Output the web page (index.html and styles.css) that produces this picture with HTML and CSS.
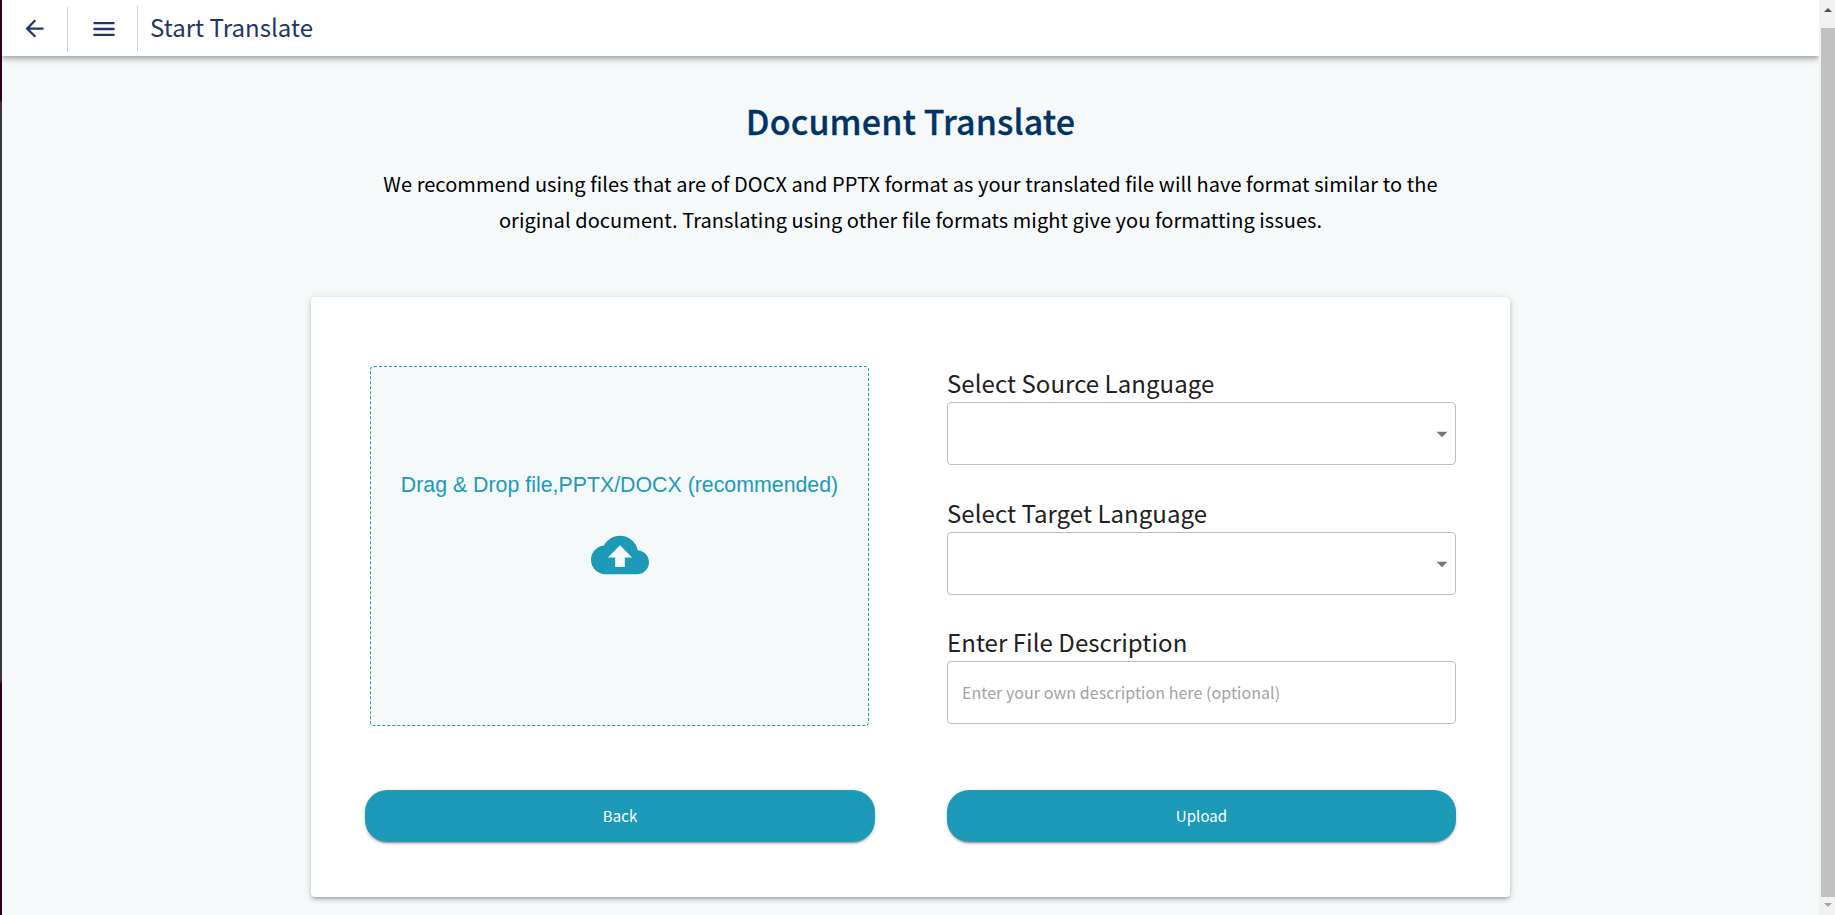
FILE: index.html
```html
<!DOCTYPE html>
<html lang="en">
<head>
<meta charset="utf-8">
<title>Start Translate</title>
<link rel="stylesheet" href="styles.css">
</head>
<body>
<div class="window">
  <div class="window-edge"></div>
  <div class="page">
    <header class="appbar">
      <button class="nav nav-back" aria-label="Back">
        <svg class="icon-back" viewBox="0 0 24 24"><path d="M20 11H7.83l5.59-5.59L12 4l-8 8 8 8 1.41-1.41L7.83 13H20v-2z"/></svg>
      </button>
      <button class="nav nav-menu" aria-label="Menu">
        <svg class="icon-menu" viewBox="0 0 24 24"><path d="M3 18h18v-2H3v2zm0-5h18v-2H3v2zm0-7v2h18V6H3z"/></svg>
      </button>
      <div class="appbar-title">Start Translate</div>
    </header>
    <main class="content">
      <h1 class="heading">Document Translate</h1>
      <p class="intro">We recommend using files that are of DOCX and PPTX format as your translated file will have format similar to the<br>original document. Translating using other file formats might give you formatting issues.</p>
      <section class="card">
        <div class="col col-left">
          <div class="dropzone">
            <p class="drop-text">Drag &amp; Drop file,PPTX/DOCX (recommended)</p>
            <svg class="icon-cloud" viewBox="0 0 24 24"><path d="M19.35 10.04C18.67 6.59 15.64 4 12 4 9.11 4 6.6 5.64 5.35 8.04 2.34 8.36 0 10.91 0 14c0 3.31 2.69 6 6 6h13c2.76 0 5-2.24 5-5 0-2.64-2.05-4.78-4.65-4.96zM14 13v4h-4v-4H7l5-5 5 5h-3z"/></svg>
          </div>
          <button class="btn">Back</button>
        </div>
        <div class="col col-right">
          <div class="fields">
            <div class="field">
              <div class="label">Select Source Language</div>
              <div class="box box-select"><svg class="icon-caret" viewBox="0 0 24 24"><path d="M7 10l5 5 5-5z"/></svg></div>
            </div>
            <div class="field">
              <div class="label">Select Target Language</div>
              <div class="box box-select"><svg class="icon-caret" viewBox="0 0 24 24"><path d="M7 10l5 5 5-5z"/></svg></div>
            </div>
            <div class="field field-text">
              <div class="label">Enter File Description</div>
              <input class="box box-input" type="text" placeholder="Enter your own description here (optional)">
            </div>
          </div>
          <button class="btn">Upload</button>
        </div>
      </section>
    </main>
  </div>
  <div class="scrollbar">
    <svg class="scroll-arrow" viewBox="0 0 8 4"><path d="M4 0L8 4H0z" fill="#505050"/></svg>
    <div class="scroll-thumb"></div>
    <svg class="scroll-arrow" viewBox="0 0 8 4"><path d="M0 0H8L4 4z" fill="#a3a3a3"/></svg>
  </div>
</div>
</body>
</html>
```

FILE: styles.css
```css
* { box-sizing: border-box; }
body { margin: 0; font-family: "Noto Sans CJK SC", sans-serif; overflow: hidden; }
button { border: 0; padding: 0; background: none; font-family: inherit; }

.window { display: flex; width: 1835px; height: 915px; overflow: hidden; }
.window-edge { width: 2px; background: linear-gradient(#2c001e 0 99px, #3a3437 103px 680px, #2c001e 684px); }
.page { width: 1817px; background: #f5f9fa; overflow: hidden; }

.appbar { display: flex; height: 56px; background: #fff; box-shadow: 0 2px 4px -1px rgba(0,0,0,.2), 0 4px 5px 0 rgba(0,0,0,.14), 0 1px 10px 0 rgba(0,0,0,.12); }
.nav { display: flex; align-items: center; justify-content: center; height: 45px; fill: #233466; }
.nav-back { width: 66px; margin-top: 7px; padding-bottom: 2px; border-right: 1px solid #d0d0d0; }
.nav-menu { width: 70px; margin-top: 6px; border-right: 1px solid #d0d0d0; }
.icon-back { width: 27px; height: 27px; }
.icon-menu { width: 28px; height: 28px; margin-left: 3px; }
.appbar-title { margin-left: 12px; font-size: 24px; line-height: 53px; letter-spacing: .04px; color: #233466; }

.content { display: flex; flex-direction: column; align-items: center; }
.heading { margin: 45px 0 0; font-size: 34px; line-height: 40px; font-weight: 500; letter-spacing: .12px; color: #003366; -webkit-text-stroke: .3px #003366; }
.intro { margin: 25px 0 0; font-size: 20px; line-height: 36px; letter-spacing: .06px; text-align: center; color: #000; white-space: nowrap; }

.card { display: flex; justify-content: space-between; width: 1199px; height: 600px; margin-top: 59px; padding: 69px 54px 55px; background: #fff; border-radius: 4px; box-shadow: 0 3px 3px -2px rgba(0,0,0,.2), 0 3px 4px 0 rgba(0,0,0,.14), 0 1px 8px 0 rgba(0,0,0,.12); }
.col { display: flex; flex-direction: column; justify-content: space-between; }
.col-left { width: 510px; }
.col-right { width: 509px; }
.dropzone { display: flex; flex-direction: column; align-items: center; height: 360px; margin: 0 6px 0 5px; padding-top: 104px; background: #f5f9fa; border: 1px dashed #1c9ab7; border-radius: 4px; }
.drop-text { margin: 0; font: 21.33px/28px "Liberation Sans", Arial, sans-serif; color: #1c9ab7; white-space: nowrap; }
.icon-cloud { width: 58px; height: 58px; margin-top: 27px; fill: #1c9ab7; }

.fields { display: flex; flex-direction: column; gap: 31px; }
.field-text { margin-top: -1px; }
.label { margin-bottom: 3px; font-size: 24px; line-height: 33px; letter-spacing: .05px; color: #212121; white-space: nowrap; }
.box { display: flex; align-items: center; width: 100%; height: 63px; border: 1px solid #bebebe; border-radius: 4px; background: #fff; }
.box-select { justify-content: flex-end; }
.icon-caret { width: 26px; height: 26px; fill: #757575; }
.box-input { padding: 0 14px 2px; font: 16px "Noto Sans CJK SC", sans-serif; letter-spacing: .06px; }
.box-input::placeholder { color: #a2a2a2; opacity: 1; }

.btn { width: 100%; height: 52px; border-radius: 22px; background: #1c9ab7; color: #fff; font-size: 15px; line-height: 52px; letter-spacing: .05px; box-shadow: 0 3px 1px -2px rgba(0,0,0,.2), 0 2px 2px 0 rgba(0,0,0,.14), 0 1px 5px 0 rgba(0,0,0,.12); }

.scrollbar { display: flex; flex-direction: column; align-items: flex-end; width: 16px; padding: 8px 0; background: #f1f1f1; }
.scroll-arrow { width: 8px; height: 4px; margin-right: 3px; }
.scroll-thumb { width: 14px; height: 869px; margin: 16px 0 6px; background: #c1c1c1; flex: none; }
```
